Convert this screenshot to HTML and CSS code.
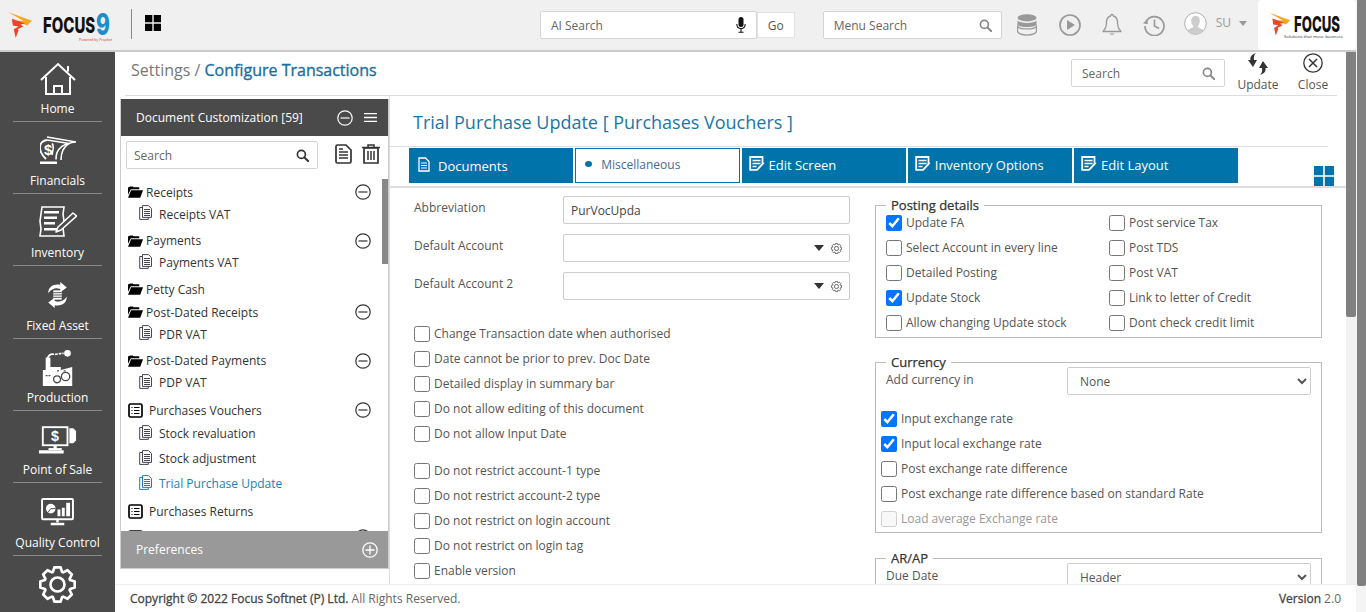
FILE: index.html
```html
<!DOCTYPE html>
<html lang="en">
<head>
  <meta charset="UTF-8" />
  <meta name="viewport" content="width=device-width, initial-scale=1.0"/>
  <title>Configure Transactions</title>
  <link rel="stylesheet" href="styles.css">
</head>
<body>
  <svg class="sprite" aria-hidden="true">
    <defs>
      <symbol id="i-mark" viewBox="0 0 26 28">
        <path fill="#f7a823" d="M0 0l25 9-5 5L8 9l8 0z"/>
        <path fill="#e8452a" d="M4 7l14 5-5 1 3 2-6 3 1 1-3 8-2-9 5-3-6-1z"/>
      </symbol>
      <symbol id="i-search" viewBox="0 0 14 14">
        <circle cx="5.8" cy="5.8" r="4.3" fill="none" stroke="currentColor" stroke-width="1.8"/>
        <path d="M9 9l4 4" stroke="currentColor" stroke-width="2.2" stroke-linecap="round"/>
      </symbol>
      <symbol id="i-minus" viewBox="0 0 16 16">
        <circle cx="8" cy="8" r="7.2" fill="none" stroke="currentColor" stroke-width="1.2"/>
        <path d="M3.5 8h9" stroke="currentColor" stroke-width="1.2"/>
      </symbol>
      <symbol id="i-folder" viewBox="0 0 16 12">
        <path fill="#000" d="M0 2V1h1l1-1h3l1 1h6v2H3L0 9z"/>
        <path fill="#000" d="M3.3 4H16l-3 8H0z"/>
      </symbol>
      <symbol id="i-list" viewBox="0 0 15 15">
        <rect x="1" y="1" width="13" height="13" rx="1.5" fill="none" stroke="#000" stroke-width="1.7"/>
        <path d="M3.5 4.5h1M6 4.5h5.5M3.5 7.5h1M6 7.5h5.5M3.5 10.5h1M6 10.5h5.5" stroke="#000" stroke-width="1.2"/>
      </symbol>
      <symbol id="i-doc" viewBox="0 0 13 15">
        <path d="M3.500 .6h6l3 3v8.800h-9zM3.500 2.500H.7v11.900h8.600v-2" fill="#fff" stroke="currentColor" stroke-width="1"/>
        <path d="M5 4.500h6M5 6.500h6M5 8.500h6M5 10.500h6" stroke="currentColor" stroke-width="1"/>
      </symbol>
      <symbol id="i-edit" viewBox="0 0 16 15">
        <path d="M1.200 1h12.300v7l-5.500 5.800H1.200z" fill="none" stroke="#fff" stroke-width="1.800"/>
        <path d="M3.500 4.500h8M3.500 7.500h8M3.500 10.500h4" stroke="#fff" stroke-width="1.400"/>
        <path d="M15.500 7l-5.500 6-1.500 1 .5-2 5-5.500z" fill="#fff"/>
      </symbol>
      <symbol id="i-gear" viewBox="0 0 36 36">
        <polygon points="13.55,5.78 15.05,1.26 20.95,1.26 22.45,5.78 23.49,6.22 27.75,4.07 31.93,8.25 29.78,12.51 30.22,13.55 34.74,15.05 34.74,20.95 30.22,22.45 29.78,23.49 31.93,27.75 27.75,31.93 23.49,29.78 22.45,30.22 20.95,34.74 15.05,34.74 13.55,30.22 12.51,29.78 8.25,31.93 4.07,27.75 6.22,23.49 5.78,22.45 1.26,20.95 1.26,15.05 5.78,13.55 6.22,12.51 4.07,8.25 8.25,4.07 12.51,6.22" fill="none" stroke="currentColor" stroke-width="2.6" stroke-linejoin="round"/>
        <circle cx="18" cy="18" r="6.8" fill="none" stroke="currentColor" stroke-width="2.6"/>
      </symbol>
    </defs>
  </svg>

  <div class="window">
    <div class="page">
      <header class="topbar">
        <div class="brand">
          <svg class="brand-mark"><use href="#i-mark"/></svg>
          <span class="brand-name">FOCUS</span>
          <span class="brand-nine">9</span>
          <span class="brand-sub">Powered by Prophet</span>
        </div>
        <span class="brand-sep"></span>
        <svg class="apps" viewBox="0 0 16 16"><path fill="#000" d="M0 0h7.300v7.300H0zM8.700 0H16v7.300H8.700zM0 8.700h7.300V16H0zM8.700 8.700H16V16H8.700z"/></svg>

        <div class="search top-ai">
          <input type="text" placeholder="AI Search">
          <svg class="mic" viewBox="0 0 10 16"><rect x="2.500" y="0" width="5" height="10" rx="2.500" fill="#111"/><path d="M.8 7c0 6 8.400 6 8.400 0M5 11.500V15M2.500 15.300h5" fill="none" stroke="#111" stroke-width="1.100"/></svg>
        </div>
        <button class="go">Go</button>
        <div class="search top-menu">
          <input type="text" placeholder="Menu Search">
          <svg class="mag"><use href="#i-search"/></svg>
        </div>

        <svg class="tool tool-db" viewBox="0 0 20 22"><ellipse cx="10" cy="3.800" rx="9.500" ry="3.600" fill="#999"/><path d="M.5 12.200c2 3.600 17 3.600 19 0v5.400c-2 4.600-17 4.600-19 0z" fill="none" stroke="#999" stroke-width="1.300"/><path d="M.5 6.200c2 3.600 17 3.600 19 0v4.200c-2 3.600-17 3.600-19 0z" fill="#999"/></svg>
        <svg class="tool tool-play" viewBox="0 0 22 22"><circle cx="11" cy="11" r="10" fill="none" stroke="#999" stroke-width="1.700"/><path d="M8 6l8 5-8 5z" fill="#999"/></svg>
        <svg class="tool tool-bell" viewBox="0 0 20 23"><path d="M10 1.500c1 0 1.500.6 1.500 1.500 3 .8 4 3.300 4 6.500 0 4 1 6.500 3.500 9H1c2.500-2.500 3.500-5 3.500-9 0-3.200 1-5.700 4-6.500 0-.9.500-1.500 1.500-1.500z" fill="none" stroke="#999" stroke-width="1.300" stroke-linejoin="round"/><path d="M7.500 20.500c1 1.600 4 1.600 5 0z" fill="#999"/></svg>
        <svg class="tool tool-hist" viewBox="0 0 22 22"><path d="M3.200 7.500A9.500 9.500 0 1 1 2 12" fill="none" stroke="#999" stroke-width="1.700"/><path d="M0 9.500l5 .5-1-4.800z" fill="#999"/><path d="M11.500 5.500V12l4.500 2.500" fill="none" stroke="#999" stroke-width="1.600"/></svg>
        <svg class="tool tool-avatar" viewBox="0 0 24 24"><circle cx="12" cy="12" r="11.300" fill="#fff" stroke="#aaa" stroke-width="1"/><path d="M12 4c3 0 4.500 2.300 4.500 5 0 2.300-1 4.300-2 5.200v1.600c2.500 1 4.500 2 5.800 3.400A11 11 0 0 1 3.700 19.200c1.300-1.400 3.300-2.400 5.800-3.400v-1.600c-1-.9-2-2.900-2-5.200 0-2.700 1.500-5 4.500-5z" fill="#ccc"/></svg>
        <span class="user">SU</span>
        <span class="caret"></span>

        <div class="corner-logo">
          <svg class="corner-mark"><use href="#i-mark"/></svg>
          <div class="corner-text">
            <span class="corner-name">FOCUS</span>
            <span class="corner-sub">Solutions that move business</span>
          </div>
        </div>
      </header>

      <div class="workspace">
        <nav class="sidebar">
          <a class="nav-item nav-home">
            <svg class="nav-icon" width="36" height="34" viewBox="0 0 36 34"><path d="M1 18L18 2l17 16M28 9.500V4" fill="none" stroke="#fff" stroke-width="2"/><path d="M6 15v17h8v-8h8v8h8V15M14.500 32h7" fill="none" stroke="#fff" stroke-width="2"/></svg>
            <span>Home</span>
          </a>
          <a class="nav-item nav-fin">
            <svg class="nav-icon" width="36" height="28" viewBox="0 0 36 28"><path d="M7 1l29 5c-7 0-10 3-13 8-2 4-2 7-2 10" fill="none" stroke="#fff" stroke-width="1.600"/><path d="M7 4l22 3.500c-6 1-10 5-12 9-1 3-1 5-1 7M12 7.500C14 9 13 15 12 19" fill="none" stroke="#fff" stroke-width="1.600"/><path d="M7 4C1 5 0 8 0 12c0 5 3 8 6 11" fill="none" stroke="#fff" stroke-width="1.800"/><path d="M0 25.500h17v2.500H0z" fill="#fff"/><text x="4" y="19" class="nav-dollar">$</text></svg>
            <span>Financials</span>
          </a>
          <a class="nav-item">
            <svg class="nav-icon" width="38" height="31" viewBox="0 0 38 31"><path d="M3 1h22l-1 7 1 7-1 7 1 8H1l1-7-1-8 1-7z" fill="none" stroke="#fff" stroke-width="1.600"/><path d="M5 5h15v2.500H5zM5 10.500h13V13H5zM5 16h11v2.500H5zM5 22h15v2.500H5z" fill="#fff"/><path d="M34 7l3.500 3L22 24l-5 2 2-5z" fill="#4a4a4a" stroke="#fff" stroke-width="1.600" stroke-linejoin="round"/></svg>
            <span>Inventory</span>
          </a>
          <a class="nav-item nav-asset">
            <svg class="nav-icon" width="23" height="26" viewBox="0 0 24 28"><path d="M2 12C2 5 8 1.500 15 3V0l7 6-7 5V7.500C10 6 6 7 2 12zM22 16c0 7-6 10.500-13 9v3l-7-6 7-5v3.500c5 1.500 9 .5 13-4.500z" fill="#fff"/><path d="M7.500 9h9v10h-9z" fill="#fff"/><path d="M7.500 11.500h9M7.500 14h9M7.500 16.500h9" stroke="#4a4a4a" stroke-width="1"/></svg>
            <span>Fixed Asset</span>
          </a>
          <a class="nav-item nav-prod">
            <svg class="nav-icon" width="32" height="36" viewBox="0 0 32 38"><path d="M5 9C6 5 9 4 12 4.500c3 .2 6-1 10-1" fill="none" stroke="#fff" stroke-width="1.800" stroke-dasharray="9 1 3 1 3 1"/><circle cx="26" cy="3.500" r="3.500" fill="#fff"/><path d="M3 8h5v13H3z" fill="#fff"/><path d="M0 21h3l3-3h13v3l12-3v20H0z" fill="#fff"/><circle cx="15" cy="31" r="3.600" fill="#fff" stroke="#4a4a4a" stroke-width="1.400"/><circle cx="24" cy="28" r="4.400" fill="#fff" stroke="#4a4a4a" stroke-width="1.400"/><path d="M3 27h6M15 22h3M22 22h3" stroke="#4a4a4a" stroke-width="1.200" stroke-dasharray="2 1"/></svg>
            <span>Production</span>
          </a>
          <a class="nav-item nav-pos">
            <svg class="nav-icon" width="38" height="28" viewBox="0 0 40 29"><rect x="4" y="1" width="26" height="19" fill="none" stroke="#fff" stroke-width="2"/><path d="M32 2h4l3 3v10l-3 3h-4z" fill="#fff"/><path d="M17 20v4M0 27h26" stroke="#fff" stroke-width="3.400"/><path d="M10 24h14" stroke="#fff" stroke-width="2"/><text x="12.500" y="16" class="nav-dollar">$</text></svg>
            <span>Point of Sale</span>
          </a>
          <a class="nav-item nav-qc">
            <svg class="nav-icon" width="33" height="28" viewBox="0 0 34 29"><rect x="1" y="1" width="32" height="21" rx="1" fill="none" stroke="#fff" stroke-width="2"/><circle cx="10" cy="11" r="5" fill="#fff"/><path d="M10 11h5M10 11l-3 4" stroke="#4a4a4a" stroke-width="1"/><path d="M17 12h3v7h-3zM21.500 10h3v9h-3zM26 5h4v14h-4z" fill="#fff"/><path d="M17 22v3M10 27h14" stroke="#fff" stroke-width="2.600"/></svg>
            <span>Quality Control</span>
          </a>
          <a class="nav-item nav-settings">
            <svg class="nav-icon" width="37" height="37"><use href="#i-gear"/></svg>
            <span>Settings</span>
          </a>
        </nav>

        <main class="main">
          <div class="main-body">
            <div class="content">
              <div class="page-head">
                <div class="crumbs"><span class="crumb-root">Settings /</span> <span class="crumb-now">Configure Transactions</span></div>
                <div class="search head-search">
                  <input type="text" placeholder="Search">
                  <svg class="mag"><use href="#i-search"/></svg>
                </div>
                <button class="head-btn head-update">
                  <svg width="20" height="22" viewBox="0 0 20 22"><path d="M8 0C3 2 2 4 2.500 7H0l5 7 4-7H6C5.500 4 6 2 8 0z" fill="#333"/><path d="M12 22c5-2 6-4 5.500-7H20l-5-7-4 7h3c.5 3 0 5-2 7z" fill="#333"/></svg>
                  <span>Update</span>
                </button>
                <button class="head-btn head-close">
                  <svg width="20" height="20" viewBox="0 0 20 20"><circle cx="10" cy="10" r="9.200" fill="none" stroke="#333" stroke-width="1.300"/><path d="M6 6l8 8M14 6l-8 8" stroke="#333" stroke-width="1.500"/></svg>
                  <span>Close</span>
                </button>
              </div>

              <div class="split">
                <aside class="panel">
                  <div class="panel-head">
                    <span>Document Customization [59]</span>
                    <svg class="panel-minus"><use href="#i-minus"/></svg>
                    <svg class="panel-menu" viewBox="0 0 13 9"><path d="M0 .5h13M0 4.500h13M0 8.500h13" stroke="#fff" stroke-width="1.400"/></svg>
                  </div>
                  <div class="panel-tools">
                    <div class="search panel-search">
                      <input type="text" placeholder="Search">
                      <svg class="mag"><use href="#i-search"/></svg>
                    </div>
                    <svg class="tool-doc" viewBox="0 0 17 20"><path d="M2.500 1H11l5 5v11.500a1.500 1.500 0 0 1-1.500 1.500h-12A1.500 1.500 0 0 1 1 17.500v-15A1.500 1.500 0 0 1 2.500 1z" fill="none" stroke="#333" stroke-width="1.700"/><path d="M4 8h9M4 11h9M4 14h9M4 5h4" stroke="#333" stroke-width="1.300"/></svg>
                    <svg class="tool-trash" viewBox="0 0 18 20"><path d="M6 3V1h6v2M0 3.500h18" fill="none" stroke="#333" stroke-width="1.500"/><path d="M2 4v15h14V4z" fill="none" stroke="#333" stroke-width="1.700"/><path d="M6 7v9M9 7v9M12 7v9" stroke="#333" stroke-width="1.500"/></svg>
                  </div>
                  <div class="tree">
                    <span class="tree-thumb"></span>
                    <div class="group">
                      <div class="group-row"><svg class="ic-folder"><use href="#i-folder"/></svg><span>Receipts</span><svg class="ic-minus"><use href="#i-minus"/></svg></div>
                      <div class="child"><svg class="ic-doc"><use href="#i-doc"/></svg><span>Receipts VAT</span></div>
                    </div>
                    <div class="group">
                      <div class="group-row"><svg class="ic-folder"><use href="#i-folder"/></svg><span>Payments</span><svg class="ic-minus"><use href="#i-minus"/></svg></div>
                      <div class="child"><svg class="ic-doc"><use href="#i-doc"/></svg><span>Payments VAT</span></div>
                    </div>
                    <div class="group group-flat">
                      <div class="group-row"><svg class="ic-folder"><use href="#i-folder"/></svg><span>Petty Cash</span></div>
                    </div>
                    <div class="group">
                      <div class="group-row"><svg class="ic-folder"><use href="#i-folder"/></svg><span>Post-Dated Receipts</span><svg class="ic-minus"><use href="#i-minus"/></svg></div>
                      <div class="child"><svg class="ic-doc"><use href="#i-doc"/></svg><span>PDR VAT</span></div>
                    </div>
                    <div class="group">
                      <div class="group-row"><svg class="ic-folder"><use href="#i-folder"/></svg><span>Post-Dated Payments</span><svg class="ic-minus"><use href="#i-minus"/></svg></div>
                      <div class="child"><svg class="ic-doc"><use href="#i-doc"/></svg><span>PDP VAT</span></div>
                    </div>
                    <div class="group group-wide">
                      <div class="group-row"><svg class="ic-list"><use href="#i-list"/></svg><span>Purchases Vouchers</span><svg class="ic-minus"><use href="#i-minus"/></svg></div>
                      <div class="child"><svg class="ic-doc"><use href="#i-doc"/></svg><span>Stock revaluation</span></div>
                      <div class="child"><svg class="ic-doc"><use href="#i-doc"/></svg><span>Stock adjustment</span></div>
                      <div class="child child-on"><svg class="ic-doc"><use href="#i-doc"/></svg><span>Trial Purchase Update</span></div>
                    </div>
                    <div class="group group-wide">
                      <div class="group-row"><svg class="ic-list"><use href="#i-list"/></svg><span>Purchases Returns</span></div>
                    </div>
                    <div class="group group-wide">
                      <div class="group-row"><svg class="ic-list"><use href="#i-list"/></svg><svg class="ic-minus"><use href="#i-minus"/></svg></div>
                    </div>
                  </div>
                  <div class="panel-foot">
                    <span>Preferences</span>
                    <svg viewBox="0 0 16 16"><circle cx="8" cy="8" r="7.200" fill="none" stroke="#fff" stroke-width="1.300"/><path d="M3.500 8h9M8 3.500v9" stroke="#fff" stroke-width="1.300"/></svg>
                  </div>
                </aside>

                <section class="editor">
                  <h2 class="editor-title">Trial Purchase Update [ Purchases Vouchers ]</h2>
                  <div class="tabs">
                    <a class="tab tab-low"><svg class="tab-doc" viewBox="0 0 12 15"><path d="M1 1h6.500L11 4.500V14H1z" fill="none" stroke="#fff" stroke-width="1.300"/><path d="M3 6h6M3 8.500h6M3 11h6" stroke="#fff" stroke-width="1"/></svg>Documents</a>
                    <a class="tab tab-on"><span class="tab-dot"></span>Miscellaneous</a>
                    <a class="tab"><svg class="tab-edit"><use href="#i-edit"/></svg>Edit Screen</a>
                    <a class="tab"><svg class="tab-edit"><use href="#i-edit"/></svg>Inventory Options</a>
                    <a class="tab"><svg class="tab-edit"><use href="#i-edit"/></svg>Edit Layout</a>
                    <svg class="tabs-grid" viewBox="0 0 20 20"><path fill="#0073aa" d="M0 0h9.200v9.200H0zM10.800 0H20v9.200h-9.200zM0 10.800h9.200V20H0zM10.800 10.800H20V20h-9.200z"/></svg>
                  </div>

                  <div class="form">
                    <div class="form-left">
                      <div class="field"><label>Abbreviation</label><input class="text-input" type="text" value="PurVocUpda"></div>
                      <div class="field">
                        <label>Default Account</label>
                        <div class="picker">
                          <span class="picker-arrow"></span>
                          <svg class="picker-gear"><use href="#i-gear"/></svg>
                        </div>
                      </div>
                      <div class="field">
                        <label>Default Account 2</label>
                        <div class="picker">
                          <span class="picker-arrow"></span>
                          <svg class="picker-gear"><use href="#i-gear"/></svg>
                        </div>
                      </div>
                      <div class="checks checks-first">
                        <label class="check"><input type="checkbox">Change Transaction date when authorised</label>
                        <label class="check"><input type="checkbox">Date cannot be prior to prev. Doc Date</label>
                        <label class="check"><input type="checkbox">Detailed display in summary bar</label>
                        <label class="check"><input type="checkbox">Do not allow editing of this document</label>
                        <label class="check"><input type="checkbox">Do not allow Input Date</label>
                      </div>
                      <div class="checks checks-next">
                        <label class="check"><input type="checkbox">Do not restrict account-1 type</label>
                        <label class="check"><input type="checkbox">Do not restrict account-2 type</label>
                        <label class="check"><input type="checkbox">Do not restrict on login account</label>
                        <label class="check"><input type="checkbox">Do not restrict on login tag</label>
                        <label class="check"><input type="checkbox">Enable version</label>
                      </div>
                    </div>

                    <div class="form-right">
                      <fieldset class="box">
                        <legend>Posting details</legend>
                        <div class="posting">
                          <label class="check"><input type="checkbox" checked>Update FA</label>
                          <label class="check"><input type="checkbox">Post service Tax</label>
                          <label class="check"><input type="checkbox">Select Account in every line</label>
                          <label class="check"><input type="checkbox">Post TDS</label>
                          <label class="check"><input type="checkbox">Detailed Posting</label>
                          <label class="check"><input type="checkbox">Post VAT</label>
                          <label class="check"><input type="checkbox" checked>Update Stock</label>
                          <label class="check"><input type="checkbox">Link to letter of Credit</label>
                          <label class="check"><input type="checkbox">Allow changing Update stock</label>
                          <label class="check"><input type="checkbox">Dont check credit limit</label>
                        </div>
                      </fieldset>

                      <fieldset class="box box-next">
                        <legend>Currency</legend>
                        <div class="select-row">
                          <label>Add currency in</label>
                          <select><option>None</option></select>
                        </div>
                        <div class="checks">
                          <label class="check"><input type="checkbox" checked>Input exchange rate</label>
                          <label class="check"><input type="checkbox" checked>Input local exchange rate</label>
                          <label class="check"><input type="checkbox">Post exchange rate difference</label>
                          <label class="check"><input type="checkbox">Post exchange rate difference based on standard Rate</label>
                          <label class="check check-off"><input type="checkbox" disabled>Load average Exchange rate</label>
                        </div>
                      </fieldset>

                      <fieldset class="box box-last">
                        <legend>AR/AP</legend>
                        <div class="select-row">
                          <label>Due Date</label>
                          <select><option>Header</option></select>
                        </div>
                      </fieldset>
                    </div>
                  </div>
                </section>
              </div>
            </div>
            <div class="vscroll"><span class="thumb thumb-inner"></span></div>
          </div>

          <footer class="footer">
            <div><b>Copyright © 2022 Focus Softnet (P) Ltd.</b> All Rights Reserved.</div>
            <div><b>Version</b> 2.0</div>
          </footer>
        </main>
      </div>
    </div>
    <div class="vscroll vscroll-outer"><span class="thumb thumb-outer"></span></div>
  </div>
</body>
</html>
```

FILE: styles.css
```css
* {
  box-sizing: border-box;
}

html, body {
  height: 100%;
}

body {
  margin: 0;
  overflow: hidden;
  background-color: #fff;
  color: #555;
  font-family: "Open Sans", "Liberation Sans", sans-serif;
  font-size: 12px;
}

input, select, button {
  font-family: inherit;
  font-size: 12px;
}

.sprite {
  position: absolute;
  width: 0;
  height: 0;
}

.window {
  display: flex;
  height: 612px;
}

.page {
  display: flex;
  flex-direction: column;
  width: 1356px;
}

/* scrollbars */
.vscroll {
  flex: none;
  width: 10px;
  background-color: #f1f1f1;
}

.vscroll-outer {
  height: 612px;
  background-color: #f4f4f4;
  padding-left: 1px;
}

.thumb {
  display: block;
  background-color: #808080;
  border-radius: 0 0 2px 2px;
}

.thumb-inner {
  height: 265px;
}

.thumb-outer {
  height: 586px;
}

/* top bar */
.topbar {
  flex: none;
  display: flex;
  align-items: center;
  height: 52px;
  background-color: #f0f0f0;
  border-bottom: 2px solid #ccc;
}

.brand {
  position: relative;
  display: flex;
  align-items: center;
  width: 131px;
  height: 50px;
  padding-left: 8px;
}

.brand-mark {
  flex: none;
  width: 25px;
  height: 27px;
  margin-top: 1px;
}

.brand-name {
  display: inline-block;
  flex: none;
  width: 49px;
  margin-left: 10px;
  color: #111;
  font-family: Inter, sans-serif;
  font-size: 22px;
  font-weight: 800;
  line-height: 24px;
  transform: scaleX(.68);
  transform-origin: left center;
}

.brand-nine {
  display: inline-block;
  flex: none;
  width: 17px;
  margin-left: 4px;
  margin-top: -2px;
  color: #1f8ccb;
  font-family: Inter, sans-serif;
  font-size: 30px;
  font-weight: 800;
  line-height: 24px;
  transform: scaleX(.7);
  transform-origin: left center;
}

.brand-sub {
  position: absolute;
  left: 79px;
  top: 38px;
  color: #d33;
  font-size: 3.500px;
  line-height: 4px;
  white-space: nowrap;
}

.brand-sep {
  width: 1px;
  height: 30px;
  background-color: #888;
  margin-bottom: 2px;
}

.apps {
  flex: none;
  width: 16px;
  height: 16px;
  margin: 0 0 4px 13px;
}

.search {
  display: flex;
  align-items: center;
  background-color: #fff;
  border: 1px solid #d5d5d5;
  border-radius: 2px;
  height: 28px;
}

.search input {
  flex: 1;
  min-width: 0;
  height: 100%;
  border: none;
  outline: none;
  background: none;
  padding: 0 0 0 10px;
  color: #555;
}

.search input::placeholder {
  color: #666;
  opacity: 1;
}

.mag {
  flex: none;
  width: 13px;
  height: 13px;
  margin-right: 9px;
  color: #888;
}

.top-ai {
  width: 217px;
  margin-left: 379px;
}

.mic {
  flex: none;
  width: 10px;
  height: 16px;
  margin-right: 10px;
}

.go {
  width: 38px;
  height: 26px;
  background-color: #fff;
  border: 1px solid #e2e2e2;
  color: #555;
  padding: 0;
}

.top-menu {
  width: 179px;
  margin-left: 28px;
}

.tool {
  flex: none;
  margin-bottom: 1px;
}

.tool-db {
  width: 20px;
  height: 22px;
  margin-left: 15px;
}

.tool-play {
  width: 22px;
  height: 22px;
  margin-left: 22px;
}

.tool-bell {
  width: 20px;
  height: 23px;
  margin-left: 21px;
}

.tool-hist {
  width: 22px;
  height: 22px;
  margin-left: 21px;
}

.tool-avatar {
  width: 23px;
  height: 23px;
  margin-left: 19px;
  margin-bottom: 3px;
}

.user {
  margin: 0 0 5px 9px;
  color: #999;
}

.caret {
  width: 0;
  height: 0;
  margin: 0 0 3px 8px;
  border-left: 4px solid transparent;
  border-right: 4px solid transparent;
  border-top: 5px solid #999;
}

.corner-logo {
  display: flex;
  align-items: flex-start;
  width: 98px;
  height: 50px;
  margin-left: 11px;
  padding: 12px 0 0 11px;
  background-color: #fff;
  border-radius: 4px;
}

.corner-mark {
  flex: none;
  width: 22px;
  height: 25px;
}

.corner-text {
  display: flex;
  flex-direction: column;
  margin-left: 3px;
}

.corner-name {
  display: block;
  width: 46px;
  margin-top: 2px;
  color: #111;
  font-family: Inter, sans-serif;
  font-size: 22px;
  line-height: 20px;
  font-weight: 800;
  transform: scaleX(.6);
  transform-origin: left center;
}

.corner-sub {
  margin-left: -10px;
  color: #333;
  font-size: 4.300px;
  line-height: 5px;
  white-space: nowrap;
}

/* left navigation */
.workspace {
  flex: 1;
  display: flex;
  min-height: 0;
}

.sidebar {
  flex: none;
  width: 115px;
  overflow: hidden;
  background-color: #4a4a4a;
  padding: 0 13px;
}

.nav-item {
  display: flex;
  flex-direction: column;
  align-items: center;
  justify-content: flex-end;
  height: 72.300px;
  padding-bottom: 4px;
  color: #fff;
  border-bottom: 1px solid #8a8a8a;
  white-space: nowrap;
}

.nav-item span {
  display: block;
  height: 17px;
  line-height: 17px;
}

.nav-icon {
  flex: none;
  margin-bottom: 7px;
}

.nav-home {
  height: 69.800px;
}

.nav-home .nav-icon {
  margin-bottom: 4px;
}

.nav-fin .nav-icon {
  margin-bottom: 8px;
}

.nav-asset .nav-icon {
  margin-bottom: 9px;
}

.nav-prod .nav-icon {
  margin-bottom: 3px;
}

.nav-qc .nav-icon {
  margin-bottom: 8px;
}

.nav-settings {
  height: 75px;
  justify-content: flex-start;
  padding-top: 10px;
  border-bottom: none;
}

.nav-settings .nav-icon {
  margin-bottom: 5px;
}

.nav-dollar {
  fill: #fff;
  font-family: "Liberation Sans", sans-serif;
  font-size: 15px;
  font-weight: 700;
}

/* main */
.main {
  flex: 1;
  display: flex;
  flex-direction: column;
  min-width: 0;
}

.main-body {
  flex: 1;
  display: flex;
  min-height: 0;
}

.content {
  flex: 1;
  display: flex;
  flex-direction: column;
  min-width: 0;
  overflow: hidden;
}

.page-head {
  flex: none;
  display: flex;
  align-items: flex-start;
  height: 44px;
  margin: 0 9px 0 10px;
  border-bottom: 1px solid #ddd;
}

.crumbs {
  flex: 1;
  padding: 6px 0 0 6px;
  font-size: 16px;
  line-height: 24px;
}

.crumb-root {
  color: #777;
}

.crumb-now {
  color: #1a6f9f;
  -webkit-text-stroke: .35px #1a6f9f;
}

.head-search {
  flex: none;
  width: 154px;
  margin-top: 7px;
}

.head-btn {
  display: flex;
  flex-direction: column;
  align-items: center;
  padding: 0;
  background: none;
  border: none;
  color: #555;
  line-height: 16px;
}

.head-update {
  width: 44px;
  margin: 1px 0 0 11px;
}

.head-close {
  width: 40px;
  margin: 1px 4px 0 13px;
}

.head-update svg {
  margin-bottom: 2px;
}

.head-close svg {
  margin-bottom: 4px;
}

.split {
  flex: 1;
  display: flex;
  min-height: 0;
}

/* tree panel */
.panel {
  flex: none;
  display: flex;
  flex-direction: column;
  width: 269px;
  height: 470px;
  margin: 3px 0 0 5px;
  border: solid #ccc;
  border-width: 0 1px 1px 1px;
}

.panel-head {
  flex: none;
  display: flex;
  align-items: center;
  height: 37px;
  padding-left: 15px;
  background-color: #4a4a4a;
  color: #fff;
}

.panel-minus {
  flex: none;
  width: 16px;
  height: 16px;
  margin-left: 34px;
  color: #fff;
}

.panel-menu {
  flex: none;
  width: 13px;
  height: 9px;
  margin-left: 11px;
}

.panel-tools {
  flex: none;
  display: flex;
  align-items: flex-start;
  height: 39px;
  padding: 5px 0 0 5px;
}

.panel-search {
  width: 192px;
}

.panel-search input {
  padding-left: 7px;
}

.panel-search .mag {
  color: #333;
  margin-right: 8px;
}

.tool-doc {
  flex: none;
  width: 17px;
  height: 20px;
  margin: 3px 0 0 17px;
}

.tool-trash {
  flex: none;
  width: 18px;
  height: 20px;
  margin: 3px 0 0 10px;
}

.tree {
  position: relative;
  flex: 1;
  min-height: 0;
  overflow: hidden;
  padding: 6px 0 0 7px;
  color: #333;
}

.tree-thumb {
  position: absolute;
  right: 0;
  top: 4px;
  width: 6px;
  height: 85px;
  background-color: #888;
}

.group {
  margin-bottom: 4px;
}

.group-flat {
  margin-bottom: 1px;
}

.group-row, .child {
  display: flex;
  align-items: center;
}

.group-row {
  height: 22px;
}

.child {
  height: 22.500px;
  padding-left: 11px;
}

.group-wide {
  margin-bottom: 3px;
  padding-top: 1px;
}

.group-wide .child {
  height: 25px;
}

.ic-folder {
  flex: none;
  width: 15px;
  height: 12px;
  margin-right: 3px;
}

.ic-list {
  flex: none;
  width: 15px;
  height: 15px;
  margin-right: 6px;
}

.ic-doc {
  flex: none;
  width: 13px;
  height: 15px;
  margin-right: 7px;
  margin-top: -3px;
  color: #445;
}

.ic-minus {
  flex: none;
  width: 16px;
  height: 16px;
  margin-left: auto;
  margin-right: 17px;
  color: #333;
}

.child-on {
  color: #1a7fb5;
}

.child-on .ic-doc {
  color: #1a7fb5;
}

.panel-foot {
  flex: none;
  display: flex;
  align-items: center;
  justify-content: space-between;
  height: 37px;
  padding: 0 10px 0 15px;
  background-color: #999;
  color: #fff;
}

.panel-foot svg {
  width: 16px;
  height: 16px;
}

/* editor */
.editor {
  flex: 1;
  min-width: 0;
  border-left: 1px solid #ddd;
}

.editor-title {
  height: 51px;
  margin: 0 18px 0 0;
  padding: 13px 0 0 23px;
  border-bottom: 1px solid #ddd;
  color: #1a76a8;
  font-size: 18px;
  font-weight: 400;
  line-height: 26px;
}

.tabs {
  display: flex;
  gap: 2px;
  height: 41px;
  padding: 1px 12px 0 19px;
  border-bottom: 2px solid #ddd;
}

.tab {
  flex: none;
  display: flex;
  align-items: center;
  width: 164.250px;
  height: 35px;
  padding: 0 0 2px 7px;
  background-color: #0073aa;
  color: #fff;
  font-size: 13px;
}

.tab-on {
  padding-left: 9px;
  background-color: #fff;
  border: 1px solid #0073aa;
  color: #44699a;
  font-size: 12px;
}

.tab-low {
  padding: 0 0 0 9px;
}

.tab-doc {
  flex: none;
  width: 12px;
  height: 15px;
  margin: -3px 8px 0 0;
}

.tab-edit {
  flex: none;
  width: 16px;
  height: 15px;
  margin: -2px 4px 0 0;
}

.tab-dot {
  flex: none;
  width: 7px;
  height: 6px;
  margin: -2px 9px 0 0;
  border-radius: 50%;
  background-color: #0073aa;
}

.tabs-grid {
  flex: none;
  width: 20px;
  height: 20px;
  margin: 18px 0 0 auto;
}

.form {
  display: flex;
  gap: 25px;
  height: 396px;
  overflow: hidden;
  padding-left: 24px;
}

.form-left {
  flex: none;
  width: 436px;
  padding-top: 8px;
}

.form-right {
  flex: none;
  width: 447px;
  padding-top: 10px;
}

.field {
  display: flex;
  align-items: flex-start;
  height: 28px;
  margin-bottom: 10px;
}

.field label {
  flex: none;
  width: 149px;
  padding-top: 3px;
  line-height: 17px;
}

.text-input, .picker {
  flex: 1;
  min-width: 0;
  height: 28px;
  border: 1px solid #ccc;
  border-radius: 2px;
  background-color: #fff;
}

.text-input {
  padding: 0 7px;
  color: #444;
}

.picker {
  display: flex;
  align-items: center;
  justify-content: flex-end;
}

.picker-arrow {
  width: 0;
  height: 0;
  border-left: 5px solid transparent;
  border-right: 5px solid transparent;
  border-top: 6px solid #333;
}

.picker-gear {
  width: 11px;
  height: 11px;
  margin: 0 7px 0 7px;
  color: #444;
}

.check {
  display: flex;
  align-items: center;
  height: 25px;
  gap: 4px;
  white-space: nowrap;
}

.check input {
  flex: none;
  width: 16px;
  height: 16px;
  margin: 1px 0 0;
}

.checks-first {
  margin-top: 21px;
}

.checks-next {
  margin-top: 12px;
}

.check-off {
  color: #999;
}

.box {
  margin: 0;
  padding: 0 0 4px 10px;
  border: 1px solid #bbb;
  min-width: 0;
}

.box legend {
  margin-left: 0;
  padding: 0 5px;
  color: #333;
  font-size: 13px;
  line-height: 14px;
  -webkit-text-stroke: .25px #333;
}

.posting {
  display: grid;
  grid-template-columns: 223px 1fr;
  grid-auto-rows: 22px;
  row-gap: 3px;
  margin-top: -1px;
}

.posting .check {
  height: 22px;
}

.box-next {
  margin-top: 17px;
  padding: 0 10px 1px 5px;
}

.box-next legend, .box-last legend {
  margin-left: 5px;
}

.box-next .checks {
  margin-top: 11px;
}

.box-last {
  margin-top: 18px;
  padding: 0 10px 0 5px;
}

.select-row {
  display: flex;
  align-items: flex-start;
  margin-top: -2px;
}

.select-row label {
  flex: none;
  width: 186px;
  padding: 4px 0 0 5px;
  line-height: 17px;
}

.select-row select {
  flex: none;
  width: 244px;
  height: 28px;
  padding-left: 8px;
  background-color: #fff;
  border: 1px solid #ccc;
  border-radius: 2px;
  color: #555;
}

/* footer */
.footer {
  flex: none;
  display: flex;
  align-items: center;
  justify-content: space-between;
  height: 28px;
  padding: 0 15px;
  background-color: #fff;
  border-top: 1px solid #eee;
  color: #666;
  font-size: 12px;
}

.footer b {
  color: #444;
  font-weight: 400;
  -webkit-text-stroke: .3px #444;
}
```
